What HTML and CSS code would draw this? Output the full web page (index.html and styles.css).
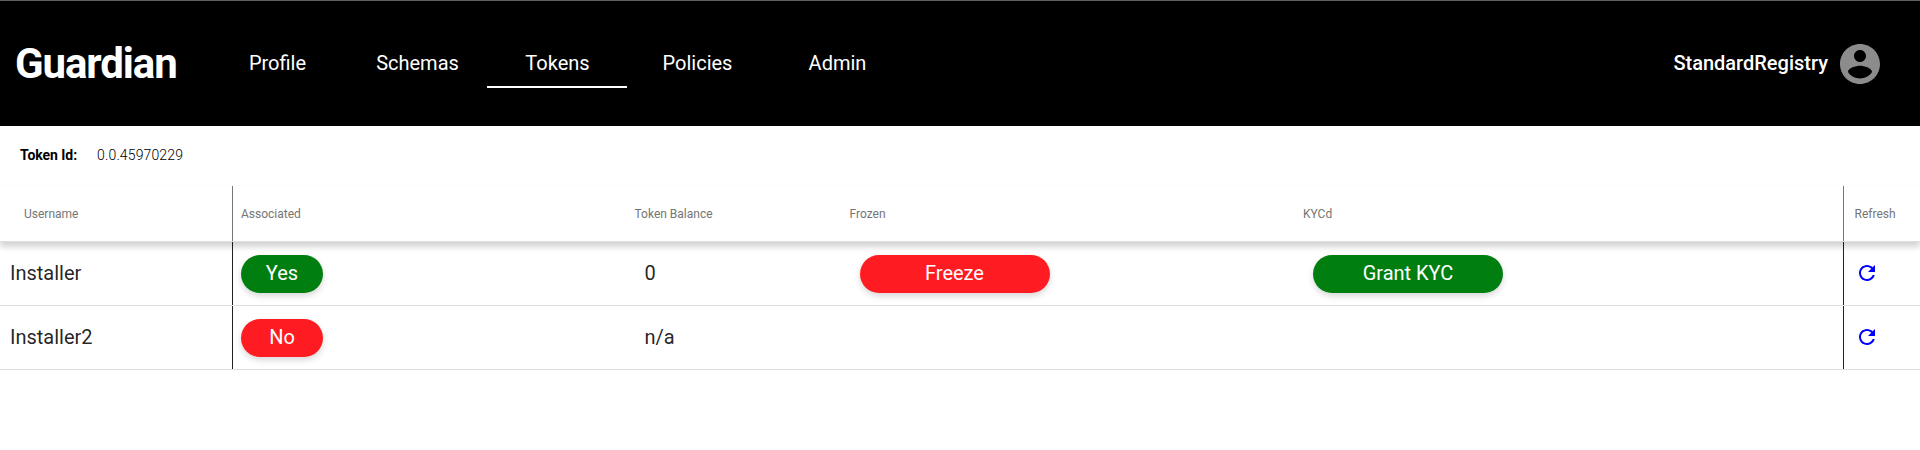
FILE: index.html
```html
<!DOCTYPE html>
<html lang="en">
<head>
<meta charset="utf-8">
<title>Guardian</title>
<link rel="stylesheet" href="styles.css">
</head>
<body>
<header class="topbar">
  <div class="brand">Guardian</div>
  <nav class="tabs">
    <a class="tab">Profile</a>
    <a class="tab">Schemas</a>
    <a class="tab active">Tokens</a>
    <a class="tab">Policies</a>
    <a class="tab">Admin</a>
  </nav>
  <div class="account">
    <span class="account-name">StandardRegistry</span>
    <svg class="avatar" viewBox="0 0 24 24"><path d="M12 2C6.48 2 2 6.48 2 12s4.48 10 10 10 10-4.48 10-10S17.52 2 12 2zm0 3c1.66 0 3 1.34 3 3s-1.34 3-3 3-3-1.34-3-3 1.34-3 3-3zm0 14.2c-2.5 0-4.71-1.28-6-3.22.03-1.99 4-3.08 6-3.08 1.99 0 5.97 1.09 6 3.08-1.29 1.94-3.5 3.22-6 3.22z"/></svg>
  </div>
</header>
<section class="token"><span class="token-label">Token Id:</span><span class="token-value">0.0.45970229</span></section>
<main class="table">
  <div class="row head">
    <div class="cell user">Username</div>
    <div class="cell">Associated</div>
    <div class="cell">Token Balance</div>
    <div class="cell">Frozen</div>
    <div class="cell">KYCd</div>
    <div class="cell refresh">Refresh</div>
  </div>
  <div class="row">
    <div class="cell user">Installer</div>
    <div class="cell"><span class="pill small green">Yes</span></div>
    <div class="cell inset">0</div>
    <div class="cell inset"><span class="pill red">Freeze</span></div>
    <div class="cell inset"><span class="pill green">Grant KYC</span></div>
    <div class="cell refresh"><svg class="reload" viewBox="0 0 24 24"><path d="M17.65 6.35C16.2 4.9 14.21 4 12 4c-4.42 0-7.99 3.58-7.99 8s3.57 8 7.99 8c3.73 0 6.84-2.55 7.73-6h-2.08c-.82 2.33-3.04 4-5.65 4-3.31 0-6-2.69-6-6s2.69-6 6-6c1.66 0 3.14.69 4.22 1.78L13 11h7V4l-2.35 2.35z"/></svg></div>
  </div>
  <div class="row">
    <div class="cell user">Installer2</div>
    <div class="cell"><span class="pill small red">No</span></div>
    <div class="cell inset">n/a</div>
    <div class="cell inset"></div>
    <div class="cell inset"></div>
    <div class="cell refresh"><svg class="reload" viewBox="0 0 24 24"><path d="M17.65 6.35C16.2 4.9 14.21 4 12 4c-4.42 0-7.99 3.58-7.99 8s3.57 8 7.99 8c3.73 0 6.84-2.55 7.73-6h-2.08c-.82 2.33-3.04 4-5.65 4-3.31 0-6-2.69-6-6s2.69-6 6-6c1.66 0 3.14.69 4.22 1.78L13 11h7V4l-2.35 2.35z"/></svg></div>
  </div>
</main>
</body>
</html>
```
FILE: styles.css
```css
* { box-sizing: border-box; }
body { margin: 0; background: #fff; font-family: Roboto, "Liberation Sans", sans-serif; color: rgba(0,0,0,.87); overflow: hidden; }
.topbar { display: flex; align-items: center; height: 126px; background: #000; border-top: 1px solid #5f6064; color: #fff; }
.brand { width: 207px; padding-left: 15px; font-size: 42px; font-weight: 700; letter-spacing: -1.1px; line-height: 50px; }
.tabs { display: flex; padding-bottom: 1px; }
.tab { width: 140px; height: 50px; padding-left: 1px; line-height: 50px; text-align: center; font-size: 20px; border-bottom: 2px solid transparent; }
.active { border-color: #fff; }
.account { display: flex; align-items: center; gap: 8px; margin-left: auto; padding-right: 36px; font-size: 20px; font-weight: 500; }
.account-name { padding-bottom: 2px; }
.avatar { width: 48px; height: 48px; fill: #8c8c8c; }
.token { height: 60px; display: flex; align-items: center; gap: 20px; padding: 0 20px 2px; font-size: 14px; color: #000; }
.token-label { font-weight: 700; letter-spacing: -.05px; }
.token-value { font-weight: 300; letter-spacing: .13px; }
.row { display: grid; grid-template-columns: 233px 401.5px 215px 453.5px 540px 77px; height: 64px; border-bottom: 1px solid #dfdfdf; }
.cell { display: flex; align-items: center; padding-bottom: 1px; font-size: 20px; }
.head { position: relative; height: 56px; box-shadow: 0 5px 6px rgba(0,0,0,.17), 0 0 2px rgba(0,0,0,.04); }
.head .cell { padding-bottom: 0; font-size: 12px; color: #757575; }
.user { padding-left: 10px; border-right: 1px solid #212121; }
.user + .cell { padding-left: 8px; }
.head .user { padding-left: 24px; border-color: #757575; }
.inset { padding-left: 10px; }
.refresh { padding-left: 10.5px; border-left: 1px solid #212121; }
.head .refresh { border-color: #757575; }
.pill { width: 190px; height: 38px; margin-top: 2px; border-radius: 19px; line-height: 36px; text-align: center; color: #fff; box-shadow: 0 3px 6px rgba(0,0,0,.16); }
.small { width: 82px; }
.green { background: #007f10; }
.red { background: #ff1b22; }
.reload { width: 24px; height: 24px; fill: #00f; }
```
